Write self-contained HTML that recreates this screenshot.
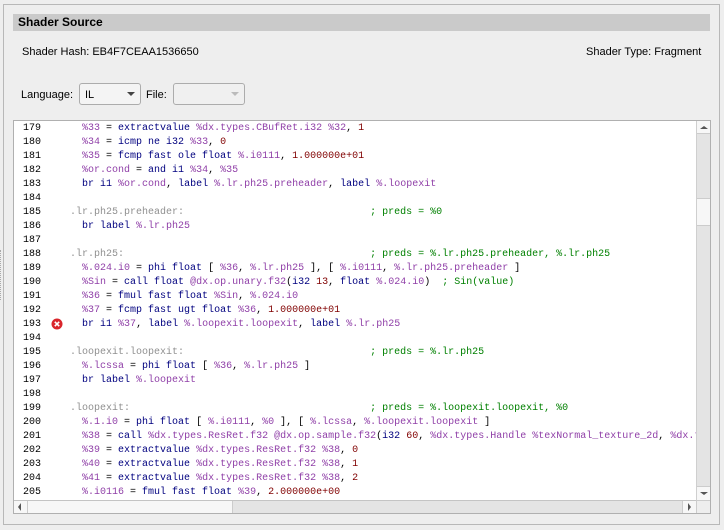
<!DOCTYPE html>
<html><head><style>
*{margin:0;padding:0;box-sizing:border-box}
body{width:724px;height:530px;background:#eeeeee;position:relative;overflow:hidden;font-family:"Liberation Sans",sans-serif;font-size:11px;color:#000}
.abs{position:absolute}
#outer{left:3px;top:4px;width:717px;height:521px;border:1px solid #b8b8b8}
#hdr{left:13px;top:14px;width:697px;height:17px;background:#cacaca;font-weight:bold;font-size:12px;padding:1px 0 0 5px}
.combo{height:22px;border:1px solid #acacac;border-radius:3px;background:#f4f4f4}
.arrow{position:absolute;width:0;height:0;border-left:4px solid transparent;border-right:4px solid transparent;border-top:4px solid #444;top:8px}
#code{left:13px;top:120px;width:698px;height:394px;border:1px solid #b0b0b0;background:#fff;overflow:hidden}
.ln{position:absolute;left:9px;font-family:"Liberation Mono",monospace;font-size:10px;line-height:14px;white-space:pre}
.tx{position:absolute;left:56px;font-family:"Liberation Mono",monospace;font-size:10px;line-height:14px;white-space:pre;color:#000}
.v{color:#9040a8}.k{color:#00007f}.n{color:#800000}.c{color:#008000}.l{color:#909090}
</style></head><body>
<div class="abs" style="left:0;top:250px;width:2px;height:50px;border-left:1px dotted #aaa"></div>
<div id="outer" class="abs"></div>
<div id="hdr" class="abs">Shader Source</div>
<div class="abs" style="left:22px;top:46px">Shader Hash: EB4F7CEAA1536650</div>
<div class="abs" style="left:586px;top:46px">Shader Type: Fragment</div>
<div class="abs" style="left:21px;top:89px">Language:</div>
<div class="abs combo" style="left:79px;top:83px;width:62px;padding:5px 0 0 5px">IL<div class="arrow" style="left:47px"></div></div>
<div class="abs" style="left:146px;top:89px">File:</div>
<div class="abs combo" style="left:173px;top:83px;width:72px;background:#f0f0f0"><div class="arrow" style="left:57px;border-top-color:#bbb"></div></div>
<div id="code" class="abs">
<div class="ln" style="top:1px">179
180
181
182
183
184
185
186
187
188
189
190
191
192
193
194
195
196
197
198
199
200
201
202
203
204
205</div>
<div class="tx" style="top:1px">  <span class="v">%33</span> = <span class="k">extractvalue</span> <span class="v">%dx.types.CBufRet.i32</span> <span class="v">%32</span>, <span class="n">1</span>
  <span class="v">%34</span> = <span class="k">icmp ne i32</span> <span class="v">%33</span>, <span class="n">0</span>
  <span class="v">%35</span> = <span class="k">fcmp fast ole float</span> <span class="v">%.i0111</span>, <span class="n">1.000000e+01</span>
  <span class="v">%or.cond</span> = <span class="k">and i1</span> <span class="v">%34</span>, <span class="v">%35</span>
  <span class="k">br i1</span> <span class="v">%or.cond</span>, <span class="k">label</span> <span class="v">%.lr.ph25.preheader</span>, <span class="k">label</span> <span class="v">%.loopexit</span>

<span class="l">.lr.ph25.preheader:</span>                               <span class="c">; preds = %0</span>
  <span class="k">br label</span> <span class="v">%.lr.ph25</span>

<span class="l">.lr.ph25:</span>                                         <span class="c">; preds = %.lr.ph25.preheader, %.lr.ph25</span>
  <span class="v">%.024.i0</span> = <span class="k">phi float</span> [ <span class="v">%36</span>, <span class="v">%.lr.ph25</span> ], [ <span class="v">%.i0111</span>, <span class="v">%.lr.ph25.preheader</span> ]
  <span class="v">%Sin</span> = <span class="k">call float</span> <span class="v">@dx.op.unary.f32</span>(<span class="k">i32</span> <span class="n">13</span>, <span class="k">float</span> <span class="v">%.024.i0</span>)  <span class="c">; Sin(value)</span>
  <span class="v">%36</span> = <span class="k">fmul fast float</span> <span class="v">%Sin</span>, <span class="v">%.024.i0</span>
  <span class="v">%37</span> = <span class="k">fcmp fast ugt float</span> <span class="v">%36</span>, <span class="n">1.000000e+01</span>
  <span class="k">br i1</span> <span class="v">%37</span>, <span class="k">label</span> <span class="v">%.loopexit.loopexit</span>, <span class="k">label</span> <span class="v">%.lr.ph25</span>

<span class="l">.loopexit.loopexit:</span>                               <span class="c">; preds = %.lr.ph25</span>
  <span class="v">%.lcssa</span> = <span class="k">phi float</span> [ <span class="v">%36</span>, <span class="v">%.lr.ph25</span> ]
  <span class="k">br label</span> <span class="v">%.loopexit</span>

<span class="l">.loopexit:</span>                                        <span class="c">; preds = %.loopexit.loopexit, %0</span>
  <span class="v">%.1.i0</span> = <span class="k">phi float</span> [ <span class="v">%.i0111</span>, <span class="v">%0</span> ], [ <span class="v">%.lcssa</span>, <span class="v">%.loopexit.loopexit</span> ]
  <span class="v">%38</span> = <span class="k">call</span> <span class="v">%dx.types.ResRet.f32</span> <span class="v">@dx.op.sample.f32</span>(<span class="k">i32</span> <span class="n">60</span>, <span class="v">%dx.types.Handle</span> <span class="v">%texNormal_texture_2d</span>, <span class="v">%dx.types</span>
  <span class="v">%39</span> = <span class="k">extractvalue</span> <span class="v">%dx.types.ResRet.f32</span> <span class="v">%38</span>, <span class="n">0</span>
  <span class="v">%40</span> = <span class="k">extractvalue</span> <span class="v">%dx.types.ResRet.f32</span> <span class="v">%38</span>, <span class="n">1</span>
  <span class="v">%41</span> = <span class="k">extractvalue</span> <span class="v">%dx.types.ResRet.f32</span> <span class="v">%38</span>, <span class="n">2</span>
  <span class="v">%.i0116</span> = <span class="k">fmul fast float</span> <span class="v">%39</span>, <span class="n">2.000000e+00</span></div>
<svg class="abs" style="left:37px;top:197px" width="12" height="12" viewBox="0 0 12 12"><circle cx="6" cy="6" r="5.5" fill="#d9252b"/><path d="M3.8 3.8L8.2 8.2M8.2 3.8L3.8 8.2" stroke="#fff" stroke-width="1.6"/></svg>
<div class="abs" style="left:682px;top:0;width:14px;height:379px;background:#e4e4e4;border-left:1px solid #cfcfcf"></div>
<div class="abs" style="left:683px;top:0;width:13px;height:13px;background:#f7f7f7;border-bottom:1px solid #ccc"></div>
<div class="abs" style="left:686px;top:5px;border-left:4px solid transparent;border-right:4px solid transparent;border-bottom:3px solid #555"></div>
<div class="abs" style="left:683px;top:77px;width:13px;height:28px;background:#f7f7f7;border-top:1px solid #ccc;border-bottom:1px solid #ccc"></div>
<div class="abs" style="left:683px;top:365px;width:13px;height:14px;background:#f7f7f7;border-top:1px solid #ccc"></div>
<div class="abs" style="left:686px;top:371px;border-left:4px solid transparent;border-right:4px solid transparent;border-top:3px solid #555"></div>
<div class="abs" style="left:0;top:379px;width:682px;height:14px;background:#e4e4e4;border-top:1px solid #c4c4c4"></div>
<div class="abs" style="left:0;top:380px;width:14px;height:13px;background:#f7f7f7;border-right:1px solid #ccc"></div>
<div class="abs" style="left:4px;top:382px;border-top:4px solid transparent;border-bottom:4px solid transparent;border-right:3px solid #555"></div>
<div class="abs" style="left:14px;top:380px;width:205px;height:13px;background:#f7f7f7;border-right:1px solid #ccc"></div>
<div class="abs" style="left:668px;top:380px;width:14px;height:13px;background:#f7f7f7;border-left:1px solid #ccc"></div>
<div class="abs" style="left:674px;top:382px;border-top:4px solid transparent;border-bottom:4px solid transparent;border-left:3px solid #555"></div>
<div class="abs" style="left:682px;top:379px;width:14px;height:14px;background:#eee;border-top:1px solid #ccc;border-left:1px solid #ccc"></div>
</div>
</body></html>
